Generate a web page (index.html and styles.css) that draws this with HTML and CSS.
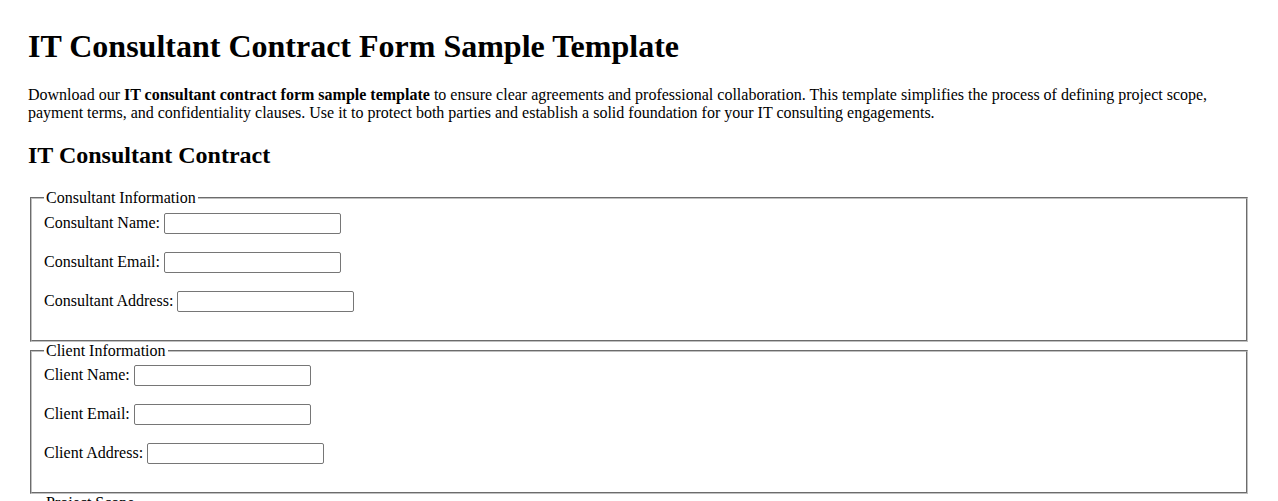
FILE: index.html
```html
<!DOCTYPE html>
<html lang="en">
  <head>
    <meta charset="UTF-8" />
    <title>IT Consultant Contract Form Sample Template</title>
    <link rel="stylesheet" href="styles.css">
  </head>
  <body>
    <div class="page">
      <h1>IT Consultant Contract Form Sample Template</h1>
      <p>
        Download our <strong>IT consultant contract form sample template</strong> to ensure clear agreements and professional collaboration. This template simplifies the process of defining project scope, payment terms, and confidentiality clauses. Use it to protect both parties and establish a solid foundation for your IT consulting engagements.
      </p>

      <h2>IT Consultant Contract</h2>

      <form>
        <!-- Consultant details -->
        <fieldset>
          <legend>Consultant Information</legend>
          <label for="consultantName">Consultant Name:</label>
          <input type="text" id="consultantName" name="consultantName"><br><br>
          <label for="consultantEmail">Consultant Email:</label>
          <input type="email" id="consultantEmail" name="consultantEmail"><br><br>
          <label for="consultantAddress">Consultant Address:</label>
          <input type="text" id="consultantAddress" name="consultantAddress"><br><br>
        </fieldset>

        <!-- Client details -->
        <fieldset>
          <legend>Client Information</legend>
          <label for="clientName">Client Name:</label>
          <input type="text" id="clientName" name="clientName"><br><br>
          <label for="clientEmail">Client Email:</label>
          <input type="email" id="clientEmail" name="clientEmail"><br><br>
          <label for="clientAddress">Client Address:</label>
          <input type="text" id="clientAddress" name="clientAddress"><br><br>
        </fieldset>

        <!-- Scope of work -->
        <fieldset>
          <legend>Project Scope</legend>
          <label for="projectDescription">Project Description:</label>
          <input type="text" id="projectDescription" name="projectDescription"><br><br>
          <label for="startDate">Start Date:</label>
          <input type="text" id="startDate" name="startDate"><br><br>
        </fieldset>
      </form>
    </div>
  </body>
</html>
```

FILE: styles.css
```css
body {
  font-family: "Liberation Serif", "Times New Roman", serif;
  font-size: 16px;
  color: #000;
  background: #fff;
  margin: 8px;
}
.page {
  padding: 20px;
}
h1 {
  font-size: 32px;
  margin: 0 0 21.44px;
}
h2 {
  font-size: 24px;
  margin: 19.92px 0;
}
p {
  margin: 16px 0;
}
fieldset {
  margin: 0 2px;
  padding: 5.6px 12px 10px;
  border: 2px groove #c0c0c0;
}
legend {
  padding: 0 2px;
}
input {
  box-sizing: border-box;
  width: 177px;
  height: 21px;
  font-family: "Liberation Sans", Arial, sans-serif;
  font-size: 13.33px;
  padding: 1px 2px;
  border: 1px solid #767676;
  border-radius: 2px;
  vertical-align: baseline;
}
```
